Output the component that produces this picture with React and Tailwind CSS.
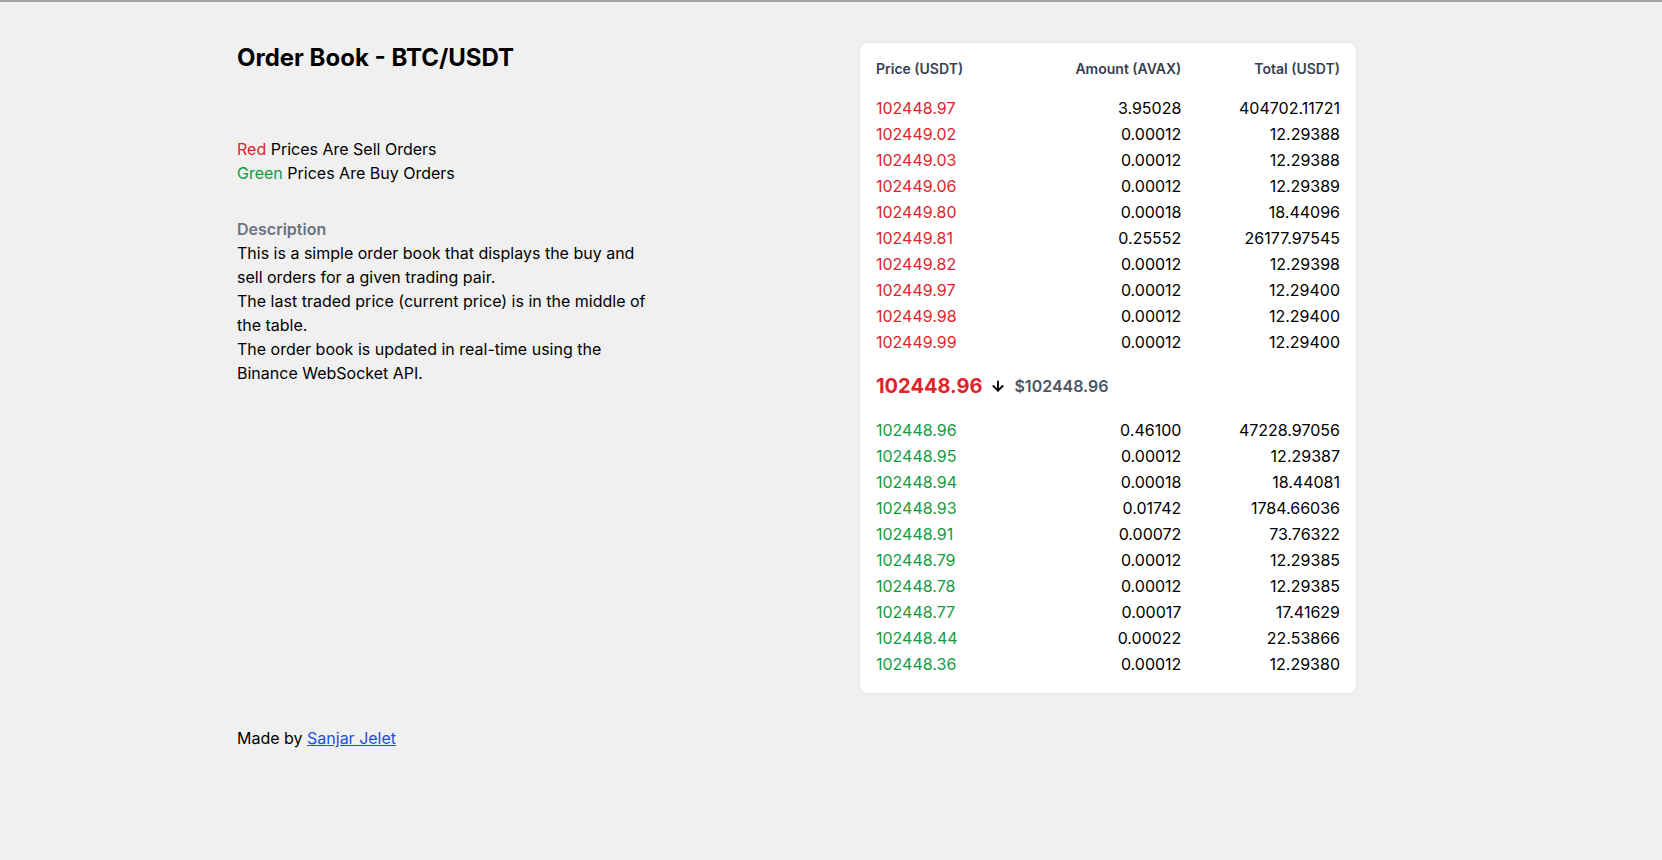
import { ArrowDown } from "lucide-react";

const asks = [
  ["102448.97", "3.95028", "404702.11721"],
  ["102449.02", "0.00012", "12.29388"],
  ["102449.03", "0.00012", "12.29388"],
  ["102449.06", "0.00012", "12.29389"],
  ["102449.80", "0.00018", "18.44096"],
  ["102449.81", "0.25552", "26177.97545"],
  ["102449.82", "0.00012", "12.29398"],
  ["102449.97", "0.00012", "12.29400"],
  ["102449.98", "0.00012", "12.29400"],
  ["102449.99", "0.00012", "12.29400"],
];

const bids = [
  ["102448.96", "0.46100", "47228.97056"],
  ["102448.95", "0.00012", "12.29387"],
  ["102448.94", "0.00018", "18.44081"],
  ["102448.93", "0.01742", "1784.66036"],
  ["102448.91", "0.00072", "73.76322"],
  ["102448.79", "0.00012", "12.29385"],
  ["102448.78", "0.00012", "12.29385"],
  ["102448.77", "0.00017", "17.41629"],
  ["102448.44", "0.00022", "22.53866"],
  ["102448.36", "0.00012", "12.29380"],
];

function Row({ row, color }) {
  return (
    <div className="grid h-[26px] grid-cols-3 items-center text-base">
      <span className={color}>{row[0]}</span>
      <span className="pr-[4px] text-right text-black">{row[1]}</span>
      <span className="text-right text-black">{row[2]}</span>
    </div>
  );
}

export default function App() {
  return (
    <div className="min-h-[860px] border-t-2 border-[#a3a3a3] bg-[#f0f0f0] font-['Inter',sans-serif] text-black">
      <div className="flex pl-[237px] pt-[40px]">
        <div className="w-[622px] shrink-0">
          <h1 className="text-2xl font-bold leading-8">Order Book - BTC/USDT</h1>
          <div className="mt-[63px] text-base leading-6">
            <p>
              <span className="text-[#e0242b]">Red</span> Prices Are Sell Orders
            </p>
            <p>
              <span className="text-[#149a3e]">Green</span> Prices Are Buy Orders
            </p>
          </div>
          <div className="mt-[32px] w-[420px] text-base leading-6">
            <p className="font-semibold text-[#6b7280]">Description</p>
            <p>
              This is a simple order book that displays the buy and sell orders for a given trading
              pair.
            </p>
            <p>The last traded price (current price) is in the middle of the table.</p>
            <p>The order book is updated in real-time using the Binance WebSocket API.</p>
          </div>
        </div>

        <div className="w-[498px] shrink-0 rounded-lg border border-[#e5e7eb] bg-white px-4 pb-4 pt-4">
          <div className="grid h-5 grid-cols-3 items-center text-sm font-semibold text-[#374151]">
            <span>Price (USDT)</span>
            <span className="pr-[4px] text-right">Amount (AVAX)</span>
            <span className="text-right">Total (USDT)</span>
          </div>
          <div className="mt-4">
            {asks.map((r, i) => (
              <Row key={i} row={r} color="text-[#e0242b]" />
            ))}
          </div>
          <div className="flex h-[62px] items-center gap-2">
            <span className="text-xl font-bold text-[#e0242b]">102448.96</span>
            <ArrowDown size={16} strokeWidth={2.75} className="text-black" />
            <span className="text-base font-semibold text-[#4b5563]">$102448.96</span>
          </div>
          <div>
            {bids.map((r, i) => (
              <Row key={i} row={r} color="text-[#149a3e]" />
            ))}
          </div>
        </div>
      </div>
      <p className="mt-[32px] pl-[237px] text-base leading-6">
        Made by{" "}
        <a href="#" className="text-[#1d4ed8] underline">
          Sanjar Jelet
        </a>
      </p>
    </div>
  );
}
